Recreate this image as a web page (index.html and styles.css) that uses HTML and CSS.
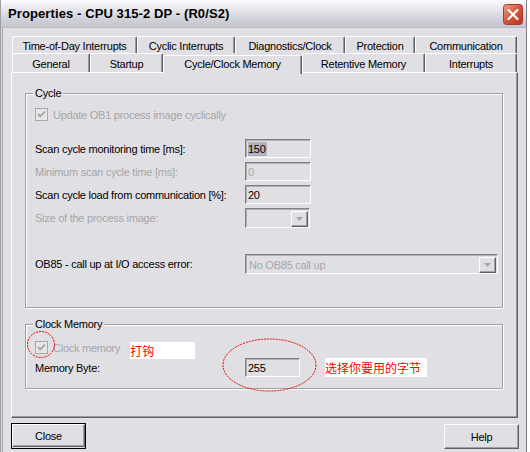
FILE: index.html
```html
<!DOCTYPE html>
<html>
<head>
<meta charset="utf-8">
<link rel="stylesheet" href="styles.css">
</head>
<body>
<div class="window">
  <div class="titlebar">
    <span class="title">Properties - CPU 315-2 DP - (R0/S2)</span>
    <span class="xbtn">
      <svg width="20" height="21" viewBox="0 0 20 21">
        <defs>
          <linearGradient id="xg" x1="0" y1="0" x2="1" y2="1">
            <stop offset="0" stop-color="#f2a48c"/>
            <stop offset="0.5" stop-color="#d9533a"/>
            <stop offset="1" stop-color="#b8341f"/>
          </linearGradient>
        </defs>
        <rect x="0.5" y="0.5" width="19" height="20" rx="3" fill="url(#xg)" stroke="#a23a2c"/>
        <path d="M5.5 6 L14.5 15 M14.5 6 L5.5 15" stroke="#fff" stroke-width="2.2" stroke-linecap="round"/>
      </svg>
    </span>
  </div>
  <div class="client">
    <div class="tabs">
      <div class="tabrow">
        <div class="tab t11">Time-of-Day Interrupts</div>
        <div class="tab t12">Cyclic Interrupts</div>
        <div class="tab t13">Diagnostics/Clock</div>
        <div class="tab t14">Protection</div>
        <div class="tab t15">Communication</div>
      </div>
      <div class="tabrow front">
        <div class="tab t21">General</div>
        <div class="tab t22">Startup</div>
        <div class="tab t23 selected">Cycle/Clock Memory</div>
        <div class="tab t24">Retentive Memory</div>
        <div class="tab t25">Interrupts</div>
      </div>
    </div>
    <div class="panel">
      <div class="group cycle">
        <div class="gtitle">Cycle</div>
        <div class="check-row disabled first-check">
          <span class="cb"><svg width="13" height="13" viewBox="0 0 13 13"><path d="M3 6 L5.2 8.4 L10 3.6" fill="none" stroke="#a7a7a7" stroke-width="2"/></svg></span>
          <span class="cb-label">Update OB1 process image cyclically</span>
        </div>
        <div class="fields">
          <div class="field-row">
            <span class="lbl">Scan cycle monitoring time [ms]:</span>
            <span class="edit w66"><span class="hl">150</span></span>
          </div>
          <div class="field-row disabled">
            <span class="lbl">Minimum scan cycle time [ms]:</span>
            <span class="edit w66">0</span>
          </div>
          <div class="field-row">
            <span class="lbl">Scan cycle load from communication [%]:</span>
            <span class="edit w66">20</span>
          </div>
          <div class="field-row disabled combo-row">
            <span class="lbl">Size of the process image:</span>
            <span class="combo w65"><span class="combo-text"></span><span class="drop"><svg width="7" height="4" viewBox="0 0 7 4"><path d="M0 0 H7 L3.5 4 Z" fill="#a7a7a7"/></svg></span></span>
          </div>
        </div>
        <div class="field-row ob85 combo-row">
          <span class="lbl">OB85 - call up at I/O access error:</span>
          <span class="combo w253 dis-text"><span class="combo-text">No OB85 call up</span><span class="drop"><svg width="7" height="4" viewBox="0 0 7 4"><path d="M0 0 H7 L3.5 4 Z" fill="#a7a7a7"/></svg></span></span>
        </div>
      </div>
      <div class="group clock">
        <div class="gtitle">Clock Memory</div>
        <div class="check-row disabled clock-check">
          <span class="cb"><svg width="13" height="13" viewBox="0 0 13 13"><path d="M3 6 L5.2 8.4 L10 3.6" fill="none" stroke="#a7a7a7" stroke-width="2"/></svg></span>
          <span class="cb-label">Clock memory</span>
          <span class="note note-check">打钩</span>
        </div>
        <div class="field-row membyte">
          <span class="lbl">Memory Byte:</span>
          <span class="edit w55">255</span>
          <span class="note note-byte">选择你要用的字节</span>
        </div>
      </div>
    </div>
    <div class="buttons">
      <span class="default-ring"><button class="btn">Close</button></span>
      <button class="btn">Help</button>
    </div>
  </div>
  <svg class="ring ring-check" width="30" height="29" viewBox="0 0 30 29"><ellipse cx="15" cy="14.5" rx="13.5" ry="13" fill="none" stroke="#e00000" stroke-dasharray="2 1"/></svg>
  <svg class="ring ring-byte" width="97" height="56" viewBox="0 0 97 56"><ellipse cx="48.5" cy="28" rx="46.5" ry="26" fill="none" stroke="#e00000" stroke-dasharray="2 1"/></svg>
</div>
</body>
</html>
```

FILE: styles.css
```css
* { box-sizing: border-box; }
html, body { margin: 0; padding: 0; }
body {
  width: 530px;
  height: 452px;
  overflow: hidden;
  background: #ffffff;
  font-family: "Liberation Sans", Arial, sans-serif;
  font-size: 11px;
  letter-spacing: -0.25px;
  color: #000;
}
.window {
  position: relative;
  width: 527px;
  height: 452px;
  display: flex;
  flex-direction: column;
  background: #e0dfe3;
  border-left: 1px solid #a0a0a8;
  border-right: 1px solid #80808a;
}
.titlebar {
  height: 28px;
  flex: none;
  display: flex;
  align-items: center;
  justify-content: space-between;
  padding: 0 3px 0 7px;
  background: linear-gradient(to bottom, #fbfbfd 0%, #e6e6ec 35%, #cfcfd8 75%, #c4c4ce 100%);
  border-bottom: 1px solid #b8b8c0;
}
.title {
  font-weight: bold;
  font-size: 13px;
  letter-spacing: 0.1px;
  color: #000;
}
.xbtn { display: flex; width: 20px; height: 21px; margin-top: 1px; }
.client {
  flex: 1;
  display: flex;
  flex-direction: column;
  padding: 7px 0 0 9px;
  border-left: 1px solid #d8d8dc;
  box-shadow: inset 1px 0 0 #a8a8ae;
}
.tabs {
  height: 37px;
  padding-top: 1px;
  display: flex;
  flex-direction: column;
  padding-left: 1px;
}
.tabrow { display: flex; height: 17px; }
.tabrow.front { height: 19px; align-items: flex-end; }
.tab {
  height: 17px;
  display: flex;
  align-items: center;
  justify-content: center;
  background: #e0dfe3;
  border-top: 1px solid #ffffff;
  border-left: 1px solid #ffffff;
  border-right: 1px solid #606060;
  box-shadow: inset -1px 0 0 #9a9a9a;
  border-radius: 2px 2px 0 0;
  white-space: nowrap;
  padding-top: 1px;
}
.tabrow.front .tab { height: 19px; }
.t11 { width: 125px; }
.t12 { width: 98px; }
.t13 { width: 110px; }
.t14 { width: 70px; }
.t15 { width: 102px; }
.t21 { width: 78px; }
.t22 { width: 73px; }
.t23 { width: 139px; }
.t24 { width: 123px; }
.t25 { width: 92px; }
.tab.selected {
  height: 22px;
  margin-bottom: -2px;
  position: relative;
  z-index: 2;
  align-items: flex-start;
  padding-top: 2px;
}
.panel {
  flex: none;
  height: 346px;
  margin-right: 8px;
  background: #e0dfe3;
  border-top: 1px solid #ffffff;
  border-left: 1px solid #ffffff;
  border-right: 1px solid #606060;
  border-bottom: 1px solid #606060;
  box-shadow: inset -1px -1px 0 #9a9a9a;
  padding: 20px 14px 0 13px;
}
.group {
  border: 1px solid #a0a0a0;
  box-shadow: inset 1px 1px 0 #ffffff, 1px 1px 0 #ffffff;
  padding: 0 0 0 9px;
}
.gtitle {
  width: fit-content;
  margin: -7px 0 0 -2px;
  padding: 0 2px;
  line-height: 13px;
  height: 13px;
  background: #e0dfe3;
}
.cycle { height: 215px; }
.clock { height: 65px; margin-top: 16px; }
.check-row {
  display: flex;
  align-items: center;
  height: 13px;
}
.first-check { margin-top: 8px; }
.clock-check { margin-top: 10px; }
.cb {
  width: 13px;
  height: 13px;
  flex: none;
  border: 1px solid #a8a8a8;
  background: #e6e6e8;
  display: flex;
}
.cb svg { margin: -1px; }
.cb-label { margin-left: 5px; }
.disabled, .dis-text { color: #a7a6aa; }
.fields {
  margin-top: 18px;
  display: flex;
  flex-direction: column;
  gap: 4px;
}
.field-row {
  display: flex;
  align-items: center;
  height: 19px;
}
.field-row.combo-row { height: 20px; }
.lbl { width: 210px; flex: none; white-space: nowrap; }
.edit {
  height: 19px;
  border-top: 1px solid #808080;
  border-left: 1px solid #808080;
  border-right: 1px solid #ffffff;
  border-bottom: 1px solid #ffffff;
  box-shadow: inset 1px 1px 0 #b0b0b0;
  display: flex;
  align-items: center;
  padding-left: 2px;
  background: #e0dfe3;
}
.w66 { width: 66px; }
.w55 { width: 55px; }
.w65 { width: 65px; }
.w253 { width: 253px; }
.hl { background: #b3b3be; color: #000; padding: 0 1px 0 0; line-height: 14px; }
.combo {
  height: 20px;
  border-top: 1px solid #808080;
  border-left: 1px solid #808080;
  border-right: 1px solid #ffffff;
  border-bottom: 1px solid #ffffff;
  box-shadow: inset 1px 1px 0 #b0b0b0;
  display: flex;
  align-items: center;
  justify-content: space-between;
  padding: 2px 1px 1px 3px;
  background: #e0dfe3;
}
.drop {
  width: 17px;
  height: 16px;
  display: flex;
  align-items: center;
  justify-content: center;
  background: #e0dfe3;
  border-top: 1px solid #ffffff;
  border-left: 1px solid #ffffff;
  border-right: 1px solid #606060;
  border-bottom: 1px solid #606060;
  box-shadow: inset -1px -1px 0 #a0a0a0;
}
.ob85 { margin-top: 26px; }
.membyte { margin-top: 4px; }
.note {
  background: #ffffff;
  color: #ff0000;
  font-family: "Noto Sans CJK SC", sans-serif;
  font-size: 12px;
  letter-spacing: 0;
  line-height: 17px;
  height: 17px;
  display: flex;
  align-items: center;
  white-space: nowrap;
}
.note-check {
  width: 65px;
  margin-left: 10px;
  margin-top: 6px;
}
.note-byte {
  width: 102px;
  height: 19px;
  margin-left: 25px;
}
.buttons {
  display: flex;
  justify-content: space-between;
  margin-top: 5px;
  padding-right: 7px;
}
.default-ring {
  display: flex;
  border: 1px solid #000;
  margin-left: 0;
}
.btn {
  width: 73px;
  height: 23px;
  margin: 0;
  font-family: "Liberation Sans", Arial, sans-serif;
  font-size: 11px;
  letter-spacing: -0.25px;
  color: #000;
  background: #e0dfe3;
  border-top: 1px solid #ffffff;
  border-left: 1px solid #ffffff;
  border-right: 1px solid #606060;
  border-bottom: 1px solid #606060;
  box-shadow: inset -1px -1px 0 #a0a0a0;
  padding: 0;
}
.buttons > .btn { width: 75px; height: 25px; margin-top: 1px; }
.ring { position: absolute; }
.ring-check { left: 25px; top: 330px; }
.ring-byte { left: 220px; top: 337px; }
```
